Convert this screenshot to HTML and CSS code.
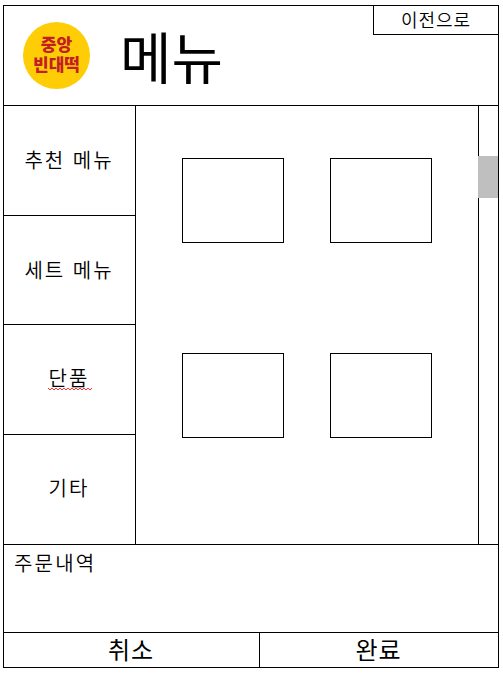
FILE: index.html
```html
<!DOCTYPE html>
<html lang="ko">
<head>
<meta charset="utf-8">
<title>메뉴</title>
<link rel="stylesheet" href="styles.css">
</head>
<body>
<div class="kiosk">
  <header class="header">
    <div class="logo">중앙<br>빈대떡</div>
    <h1 class="title">메뉴</h1>
    <button class="back">이전으로</button>
  </header>
  <main class="main">
    <nav class="sidebar">
      <a class="category"><span>추천 메뉴</span></a>
      <a class="category category-set"><span>세트 메뉴</span></a>
      <a class="category category-single"><span class="misspelled">단품<svg class="squiggle" width="44" height="4" viewBox="0 0 44 4"><path d="M0 1 L2 3 L4 1 L6 3 L8 1 L10 3 L12 1 L14 3 L16 1 L18 3 L20 1 L22 3 L24 1 L26 3 L28 1 L30 3 L32 1 L34 3 L36 1 L38 3 L40 1 L42 3 L44 1"/></svg></span></a>
      <a class="category category-etc"><span>기타</span></a>
    </nav>
    <section class="items">
      <div class="item"></div><div class="item"></div>
      <div class="item"></div><div class="item"></div>
    </section>
    <div class="scrollbar"><div class="thumb"></div></div>
  </main>
  <section class="order">주문내역</section>
  <footer class="footer">
    <button class="action cancel">취소</button>
    <button class="action done">완료</button>
  </footer>
</div>
</body>
</html>
```
FILE: styles.css
```css
* { box-sizing: border-box; }
body {
  margin: 0;
  background: #fff;
  color: #000;
  font-family: "Noto Sans CJK KR", sans-serif;
  font-weight: 350;
}
button {
  padding: 0;
  border: 0;
  background: none;
  color: inherit;
  font: inherit;
}
.kiosk {
  display: grid;
  grid-template-rows: 100px 439px 88px 34px;
  width: 496px;
  height: 663px;
  margin: 5px 0 0 3px;
  border: 1px solid #000;
}
.header {
  display: flex;
  border-bottom: 1px solid #000;
}
.logo {
  width: 67px;
  height: 67px;
  margin: 16px 0 0 19px;
  padding-top: 12px;
  border-radius: 50%;
  background: #ffcd05;
  color: #c41e25;
  font-size: 17px;
  font-weight: 900;
  line-height: 20px;
  text-align: center;
}
.title {
  margin: 9px 0 0 30px;
  font-size: 56px;
  font-weight: 400;
  line-height: 80px;
}
.back {
  width: 125px;
  height: 29px;
  margin-left: auto;
  padding-bottom: 2px;
  border: solid #000;
  border-width: 0 0 1px 1px;
  font-size: 18px;
  line-height: 24px;
  letter-spacing: 1px;
}
.main {
  display: grid;
  grid-template-columns: 132px 342px 20px;
  border-bottom: 1px solid #000;
}
.sidebar {
  display: grid;
  grid-template-rows: 110px 109px 110px 109px;
  border-right: 1px solid #000;
}
.category {
  display: flex;
  align-items: center;
  justify-content: center;
  padding: 0 1px 2px 0;
  border-bottom: 1px solid #000;
  font-size: 20px;
  letter-spacing: 2px;
}
.category-set { padding-bottom: 1px; }
.category-single,
.category-etc { padding-bottom: 4px; }
.category:last-child { border-bottom: 0; }
.misspelled { position: relative; }
.squiggle {
  position: absolute;
  left: -1px;
  bottom: 1px;
  fill: none;
  stroke: #f33;
  stroke-width: 1;
}
.items {
  display: grid;
  grid-template-columns: 102px 102px;
  grid-template-rows: 85px 85px;
  gap: 110px 46px;
  padding: 52px 0 0 46px;
}
.item { border: 1px solid #000; }
.scrollbar {
  padding-top: 50px;
  border-left: 1px solid #000;
}
.thumb {
  height: 42px;
  margin-left: -1px;
  background: #bfbfbf;
}
.order {
  padding: 3px 10px;
  border-bottom: 1px solid #000;
  font-size: 20px;
  letter-spacing: 2.2px;
}
.footer {
  display: grid;
  grid-template-columns: 256px 238px;
}
.action {
  padding: 0 1px 2px 0;
  font-size: 24px;
  line-height: 30px;
  letter-spacing: 1px;
  font-weight: 400;
}
.cancel { border-right: 1px solid #000; }
```
